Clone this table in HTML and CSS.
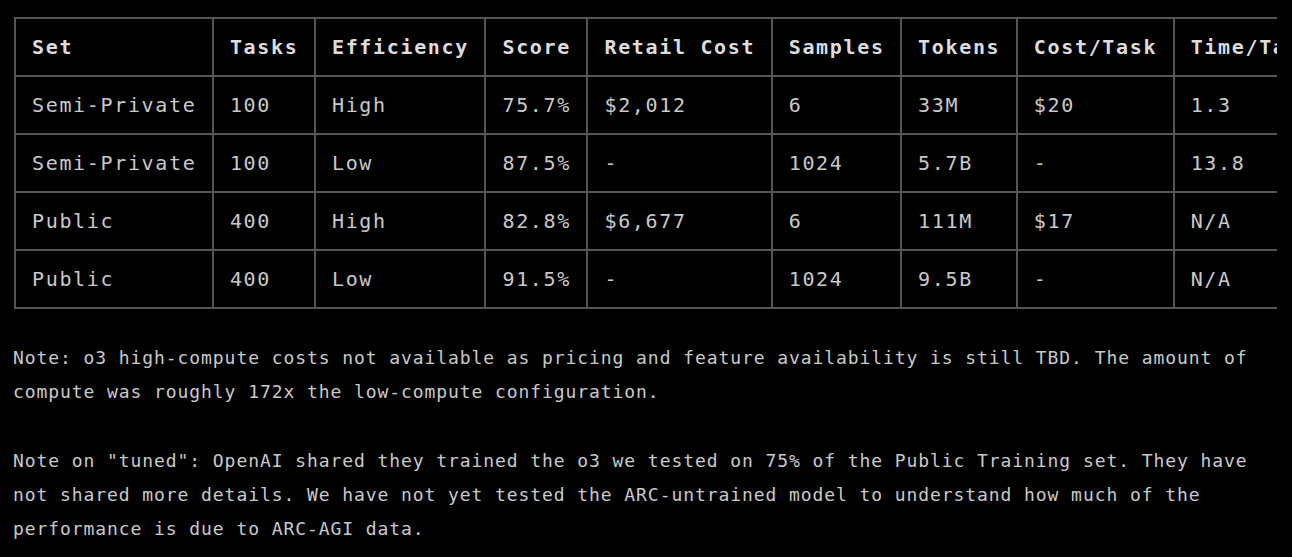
FILE: index.html
```html
<!DOCTYPE html>
<html>
<head>
<meta charset="utf-8">
<link rel="stylesheet" href="styles.css">
</head>
<body>
<div class="page">
  <div class="table-wrap">
    <table class="results">
      <thead>
        <tr><th>Set</th><th>Tasks</th><th>Efficiency</th><th>Score</th><th>Retail Cost</th><th>Samples</th><th>Tokens</th><th>Cost/Task</th><th>Time/Task (mins)</th></tr>
      </thead>
      <tbody>
        <tr><td>Semi-Private</td><td>100</td><td>High</td><td>75.7%</td><td>$2,012</td><td>6</td><td>33M</td><td>$20</td><td>1.3</td></tr>
        <tr><td>Semi-Private</td><td>100</td><td>Low</td><td>87.5%</td><td>-</td><td>1024</td><td>5.7B</td><td>-</td><td>13.8</td></tr>
        <tr><td>Public</td><td>400</td><td>High</td><td>82.8%</td><td>$6,677</td><td>6</td><td>111M</td><td>$17</td><td>N/A</td></tr>
        <tr><td>Public</td><td>400</td><td>Low</td><td>91.5%</td><td>-</td><td>1024</td><td>9.5B</td><td>-</td><td>N/A</td></tr>
      </tbody>
    </table>
  </div>
  <div class="notes">
    <p>Note: o3 high-compute costs not available as pricing and feature availability is still TBD. The amount of compute was roughly 172x the low-compute configuration.</p>
    <p>Note on "tuned": OpenAI shared they trained the o3 we tested on 75% of the Public Training set. They have not shared more details. We have not yet tested the ARC-untrained model to understand how much of the performance is due to ARC-AGI data.</p>
  </div>
</div>
</body>
</html>
```

FILE: styles.css
```css
html, body {
  margin: 0;
  padding: 0;
  background: #000;
}
.page {
  padding: 17px 0 0 13px;
  font-family: "DejaVu Sans Mono", "Liberation Mono", monospace;
  color: #c9c9c9;
}
.table-wrap {
  margin-left: 1px;
  width: 1263px;
  overflow: hidden;
}
.results {
  border-collapse: collapse;
  font-size: 20px;
  letter-spacing: 1.66px;
  line-height: 24px;
  white-space: nowrap;
}
.results th,
.results td {
  border: 2px solid #555;
  padding: 16px 15.5px 16px 16px;
  text-align: left;
}
.results th {
  font-weight: bold;
  color: #dcdcdc;
}
.notes {
  width: 1266px;
  margin-top: 32px;
  font-size: 18px;
  letter-spacing: 0.92px;
  line-height: 34.3px;
}
.notes p {
  margin: 0 0 34px 0;
}
```
